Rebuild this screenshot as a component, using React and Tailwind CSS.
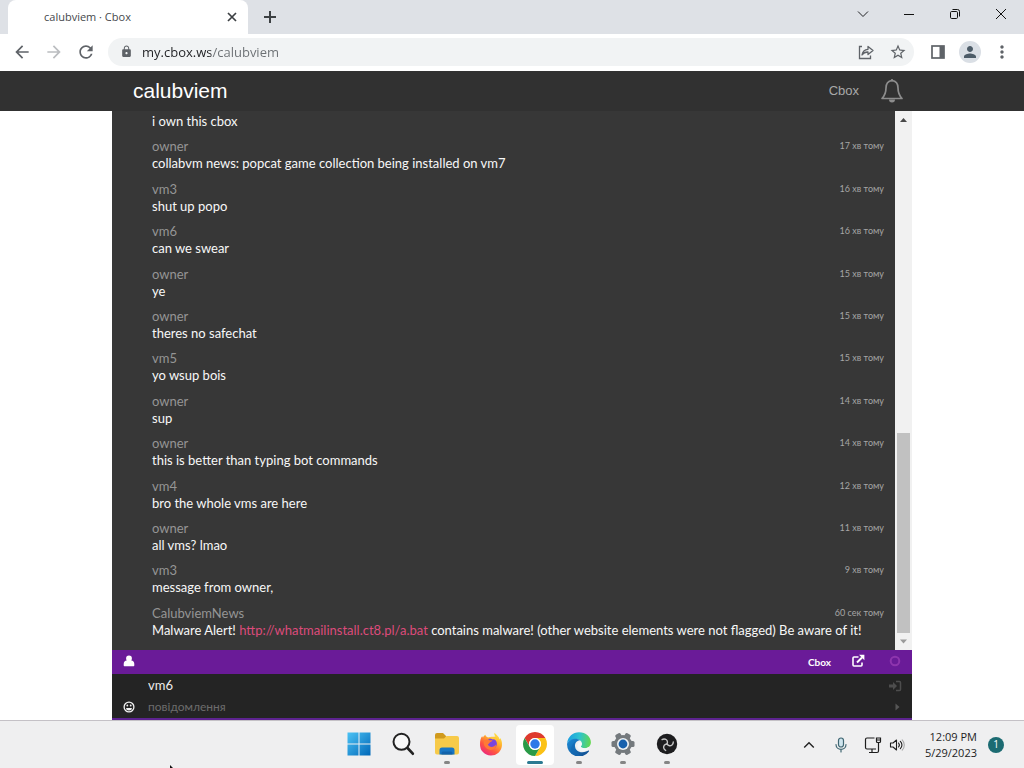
import React from "react";
import {
  MdArrowBack,
  MdArrowForward,
  MdRefresh,
  MdLock,
  MdStarBorder,
  MdPerson,
  MdMoreVert,
} from "react-icons/md";

const messages = [
  { name: "owner", time: "17 хв тому", text: "collabvm news: popcat game collection being installed on vm7" },
  { name: "vm3", time: "16 хв тому", text: "shut up popo" },
  { name: "vm6", time: "16 хв тому", text: "can we swear" },
  { name: "owner", time: "15 хв тому", text: "ye" },
  { name: "owner", time: "15 хв тому", text: "theres no safechat" },
  { name: "vm5", time: "15 хв тому", text: "yo wsup bois" },
  { name: "owner", time: "14 хв тому", text: "sup" },
  { name: "owner", time: "14 хв тому", text: "this is better than typing bot commands" },
  { name: "vm4", time: "12 хв тому", text: "bro the whole vms are here" },
  { name: "owner", time: "11 хв тому", text: "all vms? lmao" },
  { name: "vm3", time: "9 хв тому", text: "message from owner," },
];

function TabStrip() {
  const control = "flex h-7 w-[46px] items-center justify-center";
  return (
    <div className="flex h-[34px] bg-[#dee1e6] pl-2 text-[#202124]">
      <div className="flex w-60 items-center justify-between rounded-t-lg bg-white pr-2.5 pl-9">
        <span className="text-[11px] text-[#45484c]">calubviem · Cbox</span>
        <button aria-label="Close tab" className="flex size-3 items-center justify-center">
          <svg viewBox="0 0 12 12" className="size-3" stroke="#3c4043" strokeWidth="1.7">
            <path d="M2 2l8 8M10 2l-8 8" />
          </svg>
        </button>
      </div>
      <button aria-label="New tab" className="flex w-11 items-center justify-center">
        <svg viewBox="0 0 14 14" className="size-3.5" stroke="#3c4043" strokeWidth="2">
          <path d="M7 1v12M1 7h12" />
        </svg>
      </button>
      <div className="ml-auto flex">
        <button aria-label="Search tabs" className={control}>
          <svg viewBox="0 0 12 12" className="size-3" fill="none" stroke="#202124">
            <path d="M1 3.5l5 5 5-5" />
          </svg>
        </button>
        <button aria-label="Minimize" className={control}>
          <svg viewBox="0 0 12 12" className="size-3" stroke="#111">
            <path d="M1 6.5h10" />
          </svg>
        </button>
        <button aria-label="Restore" className={control}>
          <svg viewBox="0 0 12 12" className="size-3" fill="none" stroke="#111">
            <rect x="1.5" y="3.5" width="7" height="7" rx="1.2" />
            <path d="M3.5 1.5h5a2 2 0 0 1 2 2v5" />
          </svg>
        </button>
        <button aria-label="Close window" className={control}>
          <svg viewBox="0 0 12 12" className="size-3" stroke="#111">
            <path d="M1 1l10 10M11 1L1 11" />
          </svg>
        </button>
      </div>
    </div>
  );
}

function Toolbar() {
  const btn = "flex h-7 w-8 shrink-0 items-center justify-center text-[#5f6368]";
  return (
    <div className="flex h-[37px] items-center bg-white px-1.5 pb-0.5">
      <button aria-label="Back" className={btn}><MdArrowBack size={20} /></button>
      <button aria-label="Forward" className={btn}><MdArrowForward size={20} color="#bbbdc0" /></button>
      <button aria-label="Reload" className={btn}><MdRefresh size={20} /></button>
      <div className="ml-1.5 flex h-7 flex-1 items-center rounded-full bg-[#f1f3f4] pl-3">
        <MdLock size={13} color="#5f6368" />
        <input
          aria-label="Address"
          defaultValue="my.cbox.ws/calubviem"
          className="ml-2 h-6 min-w-0 flex-1 bg-[linear-gradient(90deg,#202124_70px,#6b6f73_70px)] bg-clip-text px-px text-[13px] text-transparent outline-none"
        />
        <button aria-label="Share" className={btn}>
          <svg viewBox="0 0 18 18" className="size-[18px]" fill="none" stroke="#5f6368" strokeWidth="1.3">
            <path d="M5 3.500H2.500v12h11v-3" />
            <path d="M5 12c.5-3.500 2.700-5.500 6-5.700V3.500l5 4-5 4V9c-2.500-.1-4.500.8-6 3z" strokeLinejoin="round" />
          </svg>
        </button>
        <button aria-label="Bookmark" className={btn}><MdStarBorder size={18} /></button>
      </div>
      <button aria-label="Side panel" className={btn + " ml-2"}>
        <svg viewBox="0 0 16 16" className="size-4">
          <rect x="2" y="2" width="12" height="12" fill="none" stroke="#5f6368" strokeWidth="1.7" />
          <path d="M9.500 2H14v12H9.500z" fill="#5f6368" />
        </svg>
      </button>
      <button aria-label="Profile" className={btn}>
        <span className="flex size-[22px] items-center justify-center rounded-full bg-[#dadfe5]">
          <MdPerson size={18} color="#4d5c68" />
        </span>
      </button>
      <button aria-label="Menu" className={btn}><MdMoreVert size={20} /></button>
    </div>
  );
}

function SiteHeader() {
  return (
    <header className="bg-[#313131] font-['Liberation_Sans',sans-serif]">
      <div className="mx-auto flex h-10 max-w-[800px] items-center pr-2 pl-[21px]">
        <h1 className="text-[21px] text-white">calubviem</h1>
        <a href="#cbox" className="ml-auto text-[13px] text-[#a9a9a9]">Cbox</a>
        <button aria-label="Notifications" className="ml-[21px]">
          <svg viewBox="0 0 24 26" className="h-[26px] w-6" fill="none" stroke="#8d8d8d" strokeWidth="1.700" strokeLinejoin="round">
            <path d="M12 2.500c-4.300.5-6 3.500-6 7.500 0 5.500-1.200 7.500-4 10.500h20c-2.800-3-4-5-4-10.500 0-4-1.700-7-6-7.500z" />
            <circle cx="12" cy="2.200" r="1.200" fill="#8d8d8d" stroke="none" />
            <path d="M9 21.500a3 3 0 0 0 6 0z" fill="#8d8d8d" stroke="none" />
          </svg>
        </button>
      </div>
    </header>
  );
}

function Message({ name, time, children }) {
  return (
    <li>
      <div className="flex justify-between">
        <span className="text-[#959595]">{name}</span>
        <time className="text-[9px] leading-[15px] text-[#a6a6a6]">{time}</time>
      </div>
      <p className="text-[#f7f7f7]">{children}</p>
    </li>
  );
}

function ScrollBar() {
  return (
    <div aria-hidden="true" className="flex w-[17px] shrink-0 flex-col items-center justify-between bg-[#f1f1f1]">
      <svg viewBox="0 0 17 17" className="size-[17px]"><path d="M5 11l3.500-4 3.500 4z" fill="#484848" /></svg>
      <div className="mt-auto h-[200px] w-[13px] bg-[#c1c1c1]" />
      <svg viewBox="0 0 17 17" className="size-[17px]"><path d="M5 6.500h7L8.500 10.500z" fill="#9a9a9a" /></svg>
    </div>
  );
}

function ChatForm() {
  return (
    <form className="border-b-2 border-[#5d2390] bg-[#242424] text-[12px]" onSubmit={(e) => e.preventDefault()}>
      <div className="flex h-6 items-center bg-[#6a1b98] px-2.5 pb-0.5 text-white">
        <button type="button" aria-label="Profile" className="flex w-[14px] justify-center">
          <svg viewBox="0 0 12 12" className="size-3" fill="#fff">
            <path d="M6 .5a2.900 2.900 0 0 0-2.900 3c0 .8.2 1.500.6 2.100C1.900 5.800.7 6.900.7 8.900v1.400c0 .6.400 1 1 1h8.600c.6 0 1-.4 1-1V8.900c0-2-1.200-3.100-3-3.300.4-.6.6-1.300.6-2.100A2.900 2.900 0 0 0 6 .5z" />
          </svg>
        </button>
        <a href="#cbox" className="ml-auto pt-0.5 text-[10px] font-bold">Cbox</a>
        <button type="button" aria-label="Open in new window" className="ml-5">
          <svg viewBox="0 0 14 14" className="size-3.5" fill="none" stroke="#fff" strokeWidth="1.600">
            <path d="M7.500 3H3a1 1 0 0 0-1 1v7a1 1 0 0 0 1 1h7a1 1 0 0 0 1-1V8.500" />
            <path d="M6 8.500l5-5" strokeWidth="2" />
            <path d="M8 .8h5.400v5.400z" fill="#fff" stroke="none" />
          </svg>
        </button>
        <button type="button" aria-label="Status" className="ml-[23px]">
          <svg viewBox="0 0 14 14" className="size-3.5" fill="none" stroke="#8e35ae" strokeWidth="2">
            <circle cx="7" cy="7" r="4.300" />
          </svg>
        </button>
      </div>
      <div className="flex h-6 items-center pr-2.5 pl-9">
        <input aria-label="Name" defaultValue="vm6" className="min-w-0 flex-1 text-[13px] text-[#ececec] outline-none" />
        <button type="button" aria-label="Sign in">
          <svg viewBox="0 0 14 14" className="size-3.5" fill="#4d4d4d">
            <path d="M1 5.500h4V3l4 4-4 4V8.500H1z" />
            <path d="M8 2.500h3.500a1 1 0 0 1 1 1v7a1 1 0 0 1-1 1H8" fill="none" stroke="#4d4d4d" strokeWidth="1.500" />
          </svg>
        </button>
      </div>
      <div className="flex h-5 items-center px-2.5 pb-0.5">
        <button type="button" aria-label="Smilies" className="flex w-[14px] justify-center">
          <svg viewBox="0 0 12 12" className="size-3" fill="none" stroke="#f2f2f2" strokeWidth="1.300">
            <circle cx="6" cy="6" r="4.900" />
            <path d="M3.100 6.900a2.900 2.500 0 0 0 5.800 0z" fill="#f2f2f2" stroke="none" />
            <circle cx="4.300" cy="4.500" r=".9" fill="#f2f2f2" stroke="none" />
            <circle cx="7.700" cy="4.500" r=".9" fill="#f2f2f2" stroke="none" />
          </svg>
        </button>
        <input
          aria-label="Message"
          placeholder="повідомлення"
          className="ml-3 min-w-0 flex-1 text-[12px] outline-none placeholder:text-[#6c6c6c]"
        />
        <button type="submit" aria-label="Send">
          <svg viewBox="0 0 10 10" className="size-2.5" fill="#565656"><path d="M3.500 1.500L7.500 5l-4 3.500z" /></svg>
        </button>
      </div>
    </form>
  );
}

const WindowsIcon = () => (
  <svg viewBox="0 0 24 24" className="size-6">
    <defs>
      <linearGradient id="win" x1="0" y1="0" x2="1" y2="1">
        <stop offset="0" stopColor="#4cc3f5" /><stop offset="1" stopColor="#0067b8" />
      </linearGradient>
    </defs>
    <path d="M.5.5h11v11H.5zM12.500.5h11v11h-11zM.5 12.500h11v11H.5zM12.500 12.500h11v11h-11z" fill="url(#win)" />
  </svg>
);

const SearchIcon = () => (
  <svg viewBox="0 0 24 24" className="size-6" fill="none" stroke="#222">
    <circle cx="10.500" cy="9.800" r="8" strokeWidth="2" fill="#f8f8f8" />
    <path d="M16.500 16l5.300 5.700" strokeWidth="2.700" strokeLinecap="round" />
  </svg>
);

const FolderIcon = () => (
  <svg viewBox="0 0 26 24" className="h-6 w-[26px]">
    <path d="M1 3a2 2 0 0 1 2-2h6l3 3v5H1z" fill="#d09a1e" />
    <path d="M1 6.500h9L12.500 4H23a2 2 0 0 1 2 2v14.500a2 2 0 0 1-2 2H3a2 2 0 0 1-2-2z" fill="#f7ca49" />
    <path d="M5.500 22.500V18a2.500 2.500 0 0 1 2.500-2.500h10a2.500 2.500 0 0 1 2.500 2.500v4.500z" fill="#1876c4" />
    <path d="M7.500 22.500v-1.500a1.500 1.500 0 0 1 1.500-1.500h8a1.500 1.500 0 0 1 1.500 1.500v1.500z" fill="#1162ab" />
  </svg>
);

const FirefoxIcon = () => (
  <svg viewBox="0 0 24 24" className="size-6">
    <defs>
      <linearGradient id="ff" x1=".85" y1=".05" x2=".25" y2=".95">
        <stop offset="0" stopColor="#ffe94a" /><stop offset=".35" stopColor="#ffae2c" />
        <stop offset=".7" stopColor="#ff5540" /><stop offset="1" stopColor="#ec2a7b" />
      </linearGradient>
    </defs>
    <path d="M15.500.8c-.5 2 .2 3 1 3.700L9 5.500C7 4.700 6.500 3.800 6.400 2.800 5 3.700 4.500 4.500 4.100 5.500 3.400 5.200 3.300 4.500 3.300 3.900 1.700 5.700 1 8.700 1 12.200a11 11 0 0 0 22 .8c.2-3-.6-5.300-1.900-6.900-.1.600-.2 1-.4 1.300C19.700 4.300 17.500 3 15.500.8z" fill="url(#ff)" />
    <circle cx="12.500" cy="11.700" r="5.400" fill="#7a45dd" />
    <path d="M5 9c1.800-1.700 4-1.700 5.500-.7h3c-.5 1.500-2.500 1.700-3 2.400-.2.900-.9 1.300-1.600 1.600.9 3.300 6 3.600 8.200.2.200 3.800-2.600 5.600-5.600 5.400C7 17.500 4 13.500 5 9z" fill="#ff7a35" />
    <path d="M9.500 5.500c3.500-1.800 7.500-.5 9 3.500-1.600-1.700-3.300-2-4.500-1.500z" fill="#ffc93a" />
  </svg>
);

const ChromeIcon = () => (
  <svg viewBox="0 0 24 24" className="size-6">
    <path d="M1.610 6A12 12 0 0 1 22.390 6H12a6 6 0 0 0-5.200 9z" fill="#de3b2f" />
    <path d="M22.390 6A12 12 0 0 1 12 24l5.200-9A6 6 0 0 0 12 6z" fill="#fbc116" />
    <path d="M12 24A12 12 0 0 1 1.610 6l5.190 9a6 6 0 0 0 10.400 0z" fill="#2a9a47" />
    <circle cx="12" cy="12" r="6" fill="#fff" />
    <circle cx="12" cy="12" r="4.700" fill="#2d78e8" />
  </svg>
);

const EdgeIcon = () => (
  <svg viewBox="0 0 24 24" className="size-6">
    <defs>
      <linearGradient id="edgeTop" x1="0" y1=".4" x2="1" y2=".5">
        <stop offset="0" stopColor="#1b9de2" /><stop offset=".5" stopColor="#2dc3cf" /><stop offset="1" stopColor="#62d84f" />
      </linearGradient>
      <linearGradient id="edgeLow" x1="0" y1="0" x2="1" y2="1">
        <stop offset="0" stopColor="#1b8bd8" /><stop offset="1" stopColor="#114a8b" />
      </linearGradient>
    </defs>
    <path d="M.1 11.500C.7 4.500 6 .2 12 .2c7 0 11.900 4.700 11.900 10 0 3.800-2.800 6-6 6-2.500 0-4-.8-4-1.700 0-.7 1-1.100 1-2.800 0-2.300-2-4.500-5.500-4.500C5.500 7.200 2 8.500.1 11.500z" fill="url(#edgeTop)" />
    <path d="M.1 11.500C2 8.200 5 6.700 8 6.700c2.200 0 3.800.5 5 1.500C9.500 8.500 8 11.500 8 13.700c0 3.800 3.200 6.600 7.200 6.600 3 0 5-1.400 6.300-1.700.5-.1.700.3.4.8A12 12 0 0 1 .1 11.500z" fill="url(#edgeLow)" />
    <path d="M8.700 9.800C5.500 14 7.500 21 14 23.800A12 12 0 0 1 4 21C3.500 16 5 11.500 8.700 9.800z" fill="#1267b3" opacity=".6" />
    <path d="M11 11.500c.8-1.700 3.500-1.500 3.900.3 0 1.500-1 2-1 2.700 0 .9 1.500 1.700 4 1.700 1.700 0 3.300-.6 4.400-1.700-.4 2.700-3 4.700-6 4.700-3.300 0-5.900-2.700-5.900-5.200 0-1 .2-1.800.6-2.500z" fill="#f3f7fa" />
  </svg>
);

const SettingsIcon = () => (
  <svg viewBox="0 0 24 24" className="size-6">
    <g fill="#74797d">
      <circle cx="12" cy="12" r="9" />
      {[30, 90, 150].map((angle) => (
        <rect key={angle} x="9" y="0.500" width="6" height="23" rx="1.500" transform={`rotate(${angle} 12 12)`} />
      ))}
    </g>
    <circle cx="12" cy="12" r="6" fill="#eef2f5" />
    <circle cx="12" cy="12" r="4.400" fill="#1660ad" />
  </svg>
);

const ObsIcon = () => (
  <svg viewBox="0 0 24 24" className="size-6">
    <circle cx="12" cy="12" r="10.200" fill="#1d1d1f" />
    <g fill="none" stroke="#c4c4c4" strokeWidth="1.400" strokeLinecap="round">
      {[-10, 110, 230].map((angle) => (
        <path key={angle} d="M12 12c1.400-2 .9-4-.8-5-1.200-.6-2.300-.6-3.300-.2" transform={`rotate(${angle} 12 12)`} />
      ))}
    </g>
  </svg>
);

const apps = [
  { label: "Start", Icon: WindowsIcon, state: "idle" },
  { label: "Search", Icon: SearchIcon, state: "idle" },
  { label: "File Explorer", Icon: FolderIcon, state: "running" },
  { label: "Firefox", Icon: FirefoxIcon, state: "idle" },
  { label: "Chrome", Icon: ChromeIcon, state: "active" },
  { label: "Edge", Icon: EdgeIcon, state: "running" },
  { label: "Settings", Icon: SettingsIcon, state: "running" },
  { label: "OBS Studio", Icon: ObsIcon, state: "running" },
];

const tile = { idle: "", running: "", active: "bg-white" };
const mark = {
  idle: "w-1.5 bg-transparent",
  running: "w-1.5 bg-[#858585]",
  active: "w-4 bg-[#2b7a92]",
};

function Taskbar() {
  return (
    <footer className="relative grid h-12 grid-cols-[1fr_auto_1fr] items-center border-t border-[#c4c1c6] bg-[#efeff0] pl-0.5">
      <svg aria-hidden="true" viewBox="0 0 4 3" className="absolute bottom-0 left-[169px] h-[3px] w-1"><path d="M1 0l3 3H1z" fill="#111" /></svg>
      <nav aria-label="Apps" className="col-start-2 flex">
        {apps.map(({ label, Icon, state }) => (
          <div key={label} className="flex w-11 justify-center">
            <button
              aria-label={label}
              className={`flex h-10 w-[38px] flex-col items-center justify-between rounded pt-[7px] ${tile[state]}`}
            >
              <Icon />
              <span className={`mb-px h-[3px] rounded-full ${mark[state]}`} />
            </button>
          </div>
        ))}
      </nav>
      <div className="flex items-center justify-end pr-5 text-[#1d1d1d]">
        <button aria-label="Show hidden icons" className="flex w-8 justify-center">
          <svg viewBox="0 0 12 12" className="size-3" fill="none" stroke="#222" strokeWidth="1.400"><path d="M1.200 8.500L6 3.700l4.800 4.800" /></svg>
        </button>
        <button aria-label="Microphone" className="flex w-8 justify-center">
          <svg viewBox="0 0 16 16" className="size-4" fill="none" stroke="#3f6672" strokeWidth="1.200" strokeLinecap="round">
            <rect x="5.500" y="1" width="5" height="9" rx="2.500" fill="#cfe5ee" />
            <path d="M3 7.500c0 6.500 10 6.500 10 0M8 12.500V15" />
          </svg>
        </button>
        <button aria-label="Network" className="flex w-8 justify-center">
          <svg viewBox="0 0 18 18" className="size-[18px]" fill="none" stroke="#1d1d1d" strokeWidth="1.200">
            <path d="M10.500 2H3a1.500 1.500 0 0 0-1.500 1.500v8A1.500 1.500 0 0 0 3 13h9M5 16.500h6M8 13v3.500" />
            <path d="M12.500 2h4v3.500a1 1 0 0 1-1 1h-2a1 1 0 0 1-1-1zM14.500 6.500v8.500a1.500 1.500 0 0 1-1.500 1.500h-2M12.500 4h4" />
          </svg>
        </button>
        <button aria-label="Volume" className="flex w-4 justify-center">
          <svg viewBox="0 0 16 16" className="size-4" fill="none" stroke="#1d1d1d" strokeWidth="1.100" strokeLinecap="round" strokeLinejoin="round">
            <path d="M1.500 6v4H4l3.500 3V3L4 6z" />
            <path d="M9.500 6a3 3 0 0 1 0 4M11.300 4.300a5 5 0 0 1 0 7.400" />
            <path d="M13.200 2.800a7.500 7.500 0 0 1 0 10.400" stroke="#aaa" />
          </svg>
        </button>
        <time className="ml-5 text-right text-[11px] leading-4">
          12:09 PM
          <br />
          5/29/2023
        </time>
        <span className="ml-[11px] flex size-4 items-center justify-center rounded-full bg-[#1c6b72] text-[10px] text-white">1</span>
      </div>
    </footer>
  );
}

export default function App() {
  return (
    <div className="flex min-h-screen flex-col bg-white font-['Open_Sans','Noto_Sans',sans-serif]">
      <TabStrip />
      <Toolbar />
      <SiteHeader />
      <main className="mx-auto flex w-full max-w-[800px] flex-1 flex-col bg-[#373737] font-['Lato','Noto_Sans',sans-serif]">
        <div className="flex flex-1">
          <ul className="flex min-w-0 flex-1 flex-col justify-between pt-0.5 pr-[11px] pb-[11px] pl-10 text-[13px] leading-[17px]">
            <li className="text-[#f7f7f7]">i own this cbox</li>
            {messages.map((m, i) => (
              <Message key={i} name={m.name} time={m.time}>{m.text}</Message>
            ))}
            <Message name="CalubviemNews" time="60 сек тому">
              Malware Alert!{" "}
              <a href="#flagged" className="text-[#dd4b7b]">http://whatmailinstall.ct8.pl/a.bat</a>{" "}
              contains malware! (other website elements were not flagged) Be aware of it!
            </Message>
          </ul>
          <ScrollBar />
        </div>
        <ChatForm />
      </main>
      <Taskbar />
    </div>
  );
}
